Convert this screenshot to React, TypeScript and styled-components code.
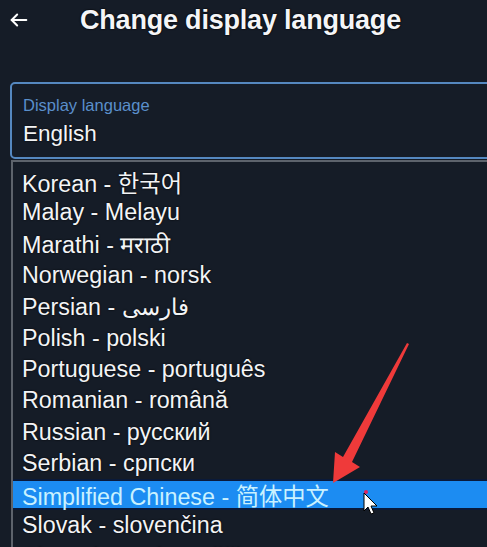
import styled, { createGlobalStyle } from "styled-components";

const GlobalStyle = createGlobalStyle`
  html, body {
    margin: 0;
    background: #151c27;
    overflow: hidden;
  }
  body {
    font-family: "Liberation Sans", Arial, "Noto Sans CJK SC", sans-serif;
    color: #f2f4f6;
  }
`;

const Page = styled.div`
  position: relative;
  width: 487px;
  height: 547px;
  overflow: hidden;
  background: #151c27;
`;

const Header = styled.div`
  display: flex;
  align-items: center;
  height: 40px;
  padding: 0 0 0 8px;
  gap: 50px;
`;

const BackButton = styled.div`
  display: flex;
  align-items: center;
  width: 22px;
  height: 22px;
`;

const Title = styled.h1`
  margin: 0;
  font-size: 27px;
  font-weight: 700;
  color: #f4f5f7;
  letter-spacing: -0.2px;
  text-shadow: 0 0 2px #000, 0 0 1px #000;
`;

const SelectBox = styled.div`
  margin: 42px -20px 0 10px;
  height: 77px;
  box-sizing: border-box;
  border: 2px solid #5588c0;
  border-radius: 5px;
  padding: 12px 11px 0;
  display: flex;
  flex-direction: column;
  gap: 6px;
`;

const Label = styled.span`
  font-size: 16.5px;
  color: #5a8fcb;
`;

const Value = styled.span`
  font-size: 22.5px;
  color: #f3f4f6;
  text-shadow: 0 0 2px #000;
`;

const List = styled.ul`
  list-style: none;
  margin: 1px -20px 0 11px;
  padding: 4px 0 0;
  border-top: 2px solid #5d636c;
  border-left: 2px solid #5d636c;
`;

const Option = styled.li<{ $active?: boolean }>`
  height: 31.3px;
  box-sizing: border-box;
  display: flex;
  align-items: center;
  padding-left: 9px;
  font-size: 23.3px;
  white-space: nowrap;
  color: ${(p) => (p.$active ? "#c9f1ff" : "#f3f4f6")};
  background: ${(p) => (p.$active ? "#1c8cf2" : "transparent")};
  border-top: ${(p) => (p.$active ? "2px solid #0a1a3a" : "none")};
  border-bottom: ${(p) => (p.$active ? "2px solid #0a1a3a" : "none")};
  text-shadow: ${(p) => (p.$active ? "none" : "0 0 2px #000")};
`;

const Overlay = styled.svg`
  position: absolute;
  left: 0;
  top: 0;
  pointer-events: none;
`;

const languages = [
  "Korean - 한국어",
  "Malay - Melayu",
  "Marathi - मराठी",
  "Norwegian - norsk",
  "Persian - فارسی",
  "Polish - polski",
  "Portuguese - português",
  "Romanian - română",
  "Russian - русский",
  "Serbian - српски",
  "Simplified Chinese - 简体中文",
  "Slovak - slovenčina",
  "Slovenian - slovenščina",
];

export default function App() {
  return (
    <Page>
      <GlobalStyle />
      <Header>
        <BackButton>
          <svg width="22" height="22" viewBox="0 0 24 24" fill="none" stroke="#fff" strokeWidth="2.2" strokeLinecap="round" strokeLinejoin="round">
            <path d="M20 12H4" />
            <path d="M10 6l-6 6 6 6" />
          </svg>
        </BackButton>
        <Title>Change display language</Title>
      </Header>
      <SelectBox>
        <Label>Display language</Label>
        <Value>English</Value>
      </SelectBox>
      <List>
        {languages.map((l) => (
          <Option key={l} $active={l.startsWith("Simplified")}>
            {l}
          </Option>
        ))}
      </List>
      <Overlay width="487" height="547" viewBox="0 0 487 547">
        <path d="M409 344 L352 462 L360 467 L333 483 L335 452 L343 457 L407 343 Z" fill="#ef3a3a" />
        <circle cx="366" cy="492" r="2" fill="#e0245e" />
        <path d="M364 493 L364 511 L368 507 L371 514 L374 513 L371 506 L377 506 Z" fill="#fff" stroke="#000" strokeWidth="1" strokeLinejoin="round" />
      </Overlay>
    </Page>
  );
}
